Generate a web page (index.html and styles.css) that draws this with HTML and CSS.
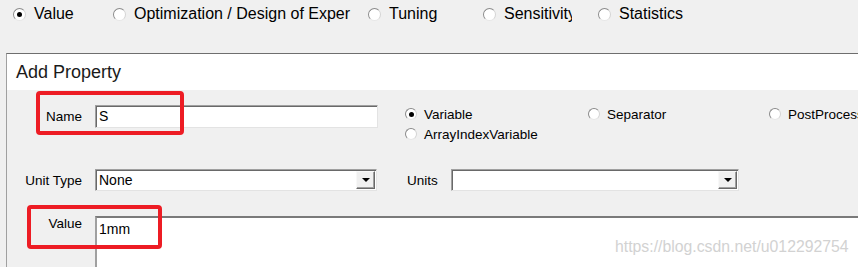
FILE: index.html
```html
<!DOCTYPE html>
<html lang="en">
<head>
    <meta charset="UTF-8">
    <title>Add Property</title>
    <link rel="stylesheet" href="styles.css">
</head>
<body>
    <div class="modes">
        <label class="mode mode-value"><span class="radio on"></span>Value</label>
        <label class="mode mode-opt"><span class="radio"></span>Optimization / Design of Exper</label>
        <label class="mode mode-tune"><span class="radio"></span>Tuning</label>
        <label class="mode mode-sens"><span class="radio"></span><span class="clip">Sensitivity</span></label>
        <label class="mode"><span class="radio"></span>Statistics</label>
    </div>

    <div class="dialog">
        <div class="dialog-title">Add Property</div>
        <div class="dialog-body">
            <div class="row row-name">
                <span class="field-label">Name</span>
                <div class="textbox">S</div>
                <div class="kinds">
                    <label class="kind"><span class="radio small on"></span>Variable</label>
                    <label class="kind"><span class="radio small"></span>Separator</label>
                    <label class="kind"><span class="radio small"></span>PostProcess</label>
                    <label class="kind"><span class="radio small"></span>ArrayIndexVariable</label>
                </div>
            </div>
            <div class="row row-units">
                <span class="field-label">Unit Type</span>
                <div class="combo combo-type">
                    <span class="combo-text">None</span>
                    <span class="combo-btn"><span class="arrow"></span></span>
                </div>
                <span class="units-label">Units</span>
                <div class="combo combo-units">
                    <span class="combo-text"></span>
                    <span class="combo-btn"><span class="arrow"></span></span>
                </div>
            </div>
            <div class="row row-value">
                <span class="field-label top">Value</span>
                <div class="valuebox">1mm</div>
            </div>
        </div>
    </div>

    <!-- annotations drawn over the screenshot -->
    <div class="mark mark-name"></div>
    <div class="mark mark-value"></div>
    <div class="watermark">https://blog.csdn.net/u012292754</div>
</body>
</html>
```

FILE: styles.css
```css
html, body {
    margin: 0;
    width: 858px;
    height: 267px;
    overflow: hidden;
}

body {
    position: relative;
    background: #f0f0f0;
    color: #000;
    font-family: "Liberation Sans", Arial, sans-serif;
}

/* radio buttons */
.radio {
    position: relative;
    display: inline-block;
    flex: none;
    width: 13px;
    height: 13px;
    box-sizing: border-box;
    border-radius: 50%;
    border: 1px solid;
    border-color: #8a8a8a #d4d4d4 #e6e6e6 #8a8a8a;
    background: #fff;
    margin-right: 8px;
}

.radio.on::after {
    content: "";
    position: absolute;
    left: 3px;
    top: 3px;
    width: 5px;
    height: 5px;
    border-radius: 50%;
    background: #000;
}

.radio.small {
    width: 12px;
    height: 12px;
    margin-right: 7px;
}

.radio.small.on::after {
    left: 2.5px;
    top: 2.5px;
}

/* top mode bar */
.modes {
    display: grid;
    grid-template-columns: 100px 255px 115px 115px auto;
    grid-auto-rows: 20px;
    align-content: start;
    height: 53px;
    padding-left: 13px;
    box-sizing: border-box;
    padding-top: 4px;
    font-size: 16px;
    line-height: 20px;
}

.mode {
    display: flex;
    align-items: center;
    white-space: nowrap;
}

.clip {
    display: inline-block;
    width: 68px;
    overflow: hidden;
}

/* dialog */
.dialog {
    margin-left: 6px;
    width: 900px;
    border-top: 1px solid #6e6e6e;
    border-left: 1px solid #a0a0a0;
}

.dialog-title {
    height: 36px;
    line-height: 36px;
    padding-left: 9px;
    background: #fff;
    font-size: 18px;
    color: #1a1a1a;
}

.dialog-body {
    padding-top: 15px;
    font-size: 13.5px;
}

.row {
    display: flex;
    align-items: flex-start;
}

.field-label {
    width: 88px;
    box-sizing: border-box;
    padding-right: 13px;
    text-align: right;
    line-height: 23px;
    flex: none;
}

.field-label.top {
    line-height: 16px;
}

.textbox {
    width: 283px;
    height: 23px;
    box-sizing: border-box;
    border: 1px solid;
    border-color: #a0a0a0 #e3e3e3 #e3e3e3 #a0a0a0;
    box-shadow: inset 1px 1px 0 #696969;
    background: #fff;
    padding-left: 3px;
    line-height: 21px;
    font-size: 14px;
}

.kinds {
    display: grid;
    grid-template-columns: 183px 181px auto;
    grid-auto-rows: 20px;
    margin-left: 27px;
    margin-top: -1px;
}

.kind {
    display: flex;
    align-items: center;
    white-space: nowrap;
}

.row-units {
    margin-top: 25px;
}

.combo {
    display: flex;
    height: 22px;
    box-sizing: border-box;
    border: 1px solid;
    border-color: #a0a0a0 #e3e3e3 #e3e3e3 #a0a0a0;
    box-shadow: inset 1px 1px 0 #696969;
    background: #fff;
    padding: 1px 1px 1px 3px;
}

.combo-type {
    width: 282px;
}

.combo-units {
    width: 288px;
}

.combo-text {
    flex: 1;
    line-height: 18px;
    font-size: 14px;
}

.combo-btn {
    display: flex;
    align-items: center;
    justify-content: center;
    width: 19px;
    box-sizing: border-box;
    background: #f0f0f0;
    border: 1px solid;
    border-color: #f8f8f8 #696969 #696969 #f8f8f8;
    box-shadow: inset -1px -1px 0 #a0a0a0;
}

.arrow {
    width: 0;
    height: 0;
    border-left: 4px solid transparent;
    border-right: 4px solid transparent;
    border-top: 4px solid #000;
}

.units-label {
    width: 44px;
    margin-left: 30px;
    line-height: 23px;
}

.row-value {
    margin-top: 24px;
}

.valuebox {
    flex: 1;
    height: 80px;
    box-sizing: border-box;
    border-top: 2px solid #7a7a7a;
    border-left: 2px solid #a0a0a0;
    background: #fff;
    padding: 3px 2px;
    line-height: 16px;
    font-size: 14px;
}

/* red annotation boxes */
.mark {
    position: absolute;
    border: 4px solid #ed1c24;
    border-radius: 4px;
    box-sizing: border-box;
}

.mark-name {
    left: 36px;
    top: 91px;
    width: 148px;
    height: 44px;
}

.mark-value {
    left: 27px;
    top: 205px;
    width: 135px;
    height: 44px;
}

.watermark {
    position: absolute;
    left: 615px;
    top: 238px;
    font-size: 15.8px;
    color: #d2d2d2;
    white-space: nowrap;
}
```
